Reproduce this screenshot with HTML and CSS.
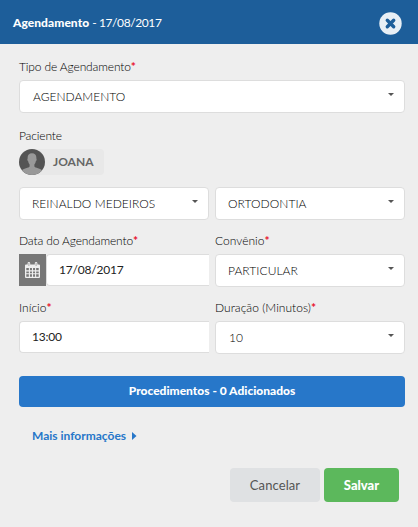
FILE: index.html
```html
<!DOCTYPE html>
<html lang="pt-BR">
<head>
<meta charset="utf-8">
<title>Agendamento</title>
<link rel="stylesheet" href="styles.css">
</head>
<body>
<header class="header">
  <h1 class="title"><b>Agendamento</b> <span class="title-date">- 17/08/2017</span></h1>
  <svg class="close" width="23" height="23" viewBox="0 0 23 23"><circle cx="11.5" cy="11.5" r="11.2" fill="#e8eff5"/><path d="M8.300 8.300l6.400 6.400M14.700 8.300l-6.400 6.400" stroke="#1d5e9a" stroke-width="3.400" stroke-linecap="round"/></svg>
</header>
<main class="form">
  <div class="field">
    <div class="label"><span>Tipo de Agendamento</span><i>*</i></div>
    <div class="select"><span>AGENDAMENTO</span></div>
  </div>
  <div class="patient">
    <div class="label"><span>Paciente</span></div>
    <div class="chip">
      <svg width="26" height="26" viewBox="0 0 26 26"><defs><clipPath id="avatar"><circle cx="13" cy="13" r="13"/></clipPath></defs><g clip-path="url(#avatar)"><path fill="#545454" d="M0 0h26v26H0z"/><path fill="#999" d="M13 4.200c-3.200 0-4.700 2-4.300 5.200-.7.2-.3 2.300.5 2.800.2 1.500.8 2.500 1.400 3.200v2.200c-.4 1.300-6.600 1.900-8.100 4.400V27h21v-5c-1.500-2.500-7.700-3.100-8.100-4.400v-2.200c.6-.7 1.200-1.700 1.400-3.200.8-.5 1.200-2.600.5-2.800.4-3.200-1.100-5.200-4.300-5.200z"/></g></svg>
      <span>JOANA</span>
    </div>
  </div>
  <div class="row professional">
    <div class="select"><span>REINALDO MEDEIROS</span></div>
    <div class="select"><span>ORTODONTIA</span></div>
  </div>
  <div class="row dates">
    <div class="field">
      <div class="label"><span>Data do Agendamento</span><i>*</i></div>
      <div class="group">
        <div class="addon"><svg width="15" height="16" viewBox="0 0 15 16"><path fill="#eee" fill-rule="evenodd" d="M1 2.500h1.600V1.300a1.300 1.300 0 0 1 2.600 0v1.200h4.600V1.300a1.300 1.300 0 0 1 2.600 0v1.200H14a1 1 0 0 1 1 1V15a1 1 0 0 1-1 1H1a1 1 0 0 1-1-1V3.500a1 1 0 0 1 1-1zM1.300 6v8.700h12.400V6z"/><path fill="none" stroke="#eee" stroke-width="1.100" d="M4.400 6v9M7.500 6v9M10.600 6v9M1 8.900h13M1 11.800h13"/><path stroke="#777" stroke-width=".6" d="M3.900 1v3M11.100 1v3"/></svg></div>
        <div class="input"><span>17/08/2017</span></div>
      </div>
    </div>
    <div class="field">
      <div class="label wide"><span>Convênio</span><i>*</i></div>
      <div class="select"><span>PARTICULAR</span></div>
    </div>
  </div>
  <div class="row times">
    <div class="field">
      <div class="label wide"><span>Início</span><i>*</i></div>
      <div class="input"><span>13:00</span></div>
    </div>
    <div class="field">
      <div class="label wide"><span>Duração (Minutos)</span><i>*</i></div>
      <div class="select"><span class="duration">10</span></div>
    </div>
  </div>
  <div class="procedures">Procedimentos - 0 Adicionados</div>
  <div class="more"><span>Mais informações</span><svg width="5" height="8" viewBox="0 0 5 8"><path d="M0 0l4.500 4L0 8z" fill="#2777c9"/></svg></div>
  <div class="actions">
    <div class="btn cancel">Cancelar</div>
    <div class="btn save">Salvar</div>
  </div>
</main>
</body>
</html>
```

FILE: styles.css
```css
* { box-sizing: border-box; }
body {
  margin: 0;
  height: 527px;
  overflow: hidden;
  background: #eee;
  color: #000;
  font: 300 12px/16px Lato, "Liberation Sans", sans-serif;
  white-space: nowrap;
}
.header {
  display: flex;
  justify-content: space-between;
  align-items: center;
  height: 44px;
  padding: 2px 16px 0 13px;
  background: #1d5e9a;
  color: #fff;
}
.title { margin: 0; font-size: 12px; font-weight: 400; line-height: 16px; }
.title b { font-weight: 900; letter-spacing: .05px; }
.title-date { letter-spacing: -.4px; }
.form { padding: 15px 13px 0 19px; }
.label { height: 21px; letter-spacing: -.13px; }
.label.wide { letter-spacing: .03px; }
.label i { color: #e8112d; font-style: normal; font-weight: 700; }
.select, .input {
  display: flex;
  align-items: center;
  justify-content: space-between;
  height: 33px;
  padding: 0 10px 0 12px;
  border: 1px solid #ddd;
  border-radius: 4px;
  background: #fff;
}
.select { letter-spacing: .05px; }
.select::after {
  content: "";
  border: 3px solid transparent;
  border-top: 3px solid #555;
  border-bottom: 0;
  margin-top: -4px;
}
.form > .field .select { padding-left: 13px; letter-spacing: 0; }
.duration { padding-left: 1px; }
.input {
  flex: 1;
  height: 32px;
  border-right: 0;
  border-radius: 4px 0 0 4px;
  color: #222;
  font-weight: 400;
  letter-spacing: -.2px;
}
.patient { margin-top: 15px; }
.chip {
  display: flex;
  align-items: center;
  gap: 8px;
  width: 85px;
  height: 26px;
  border-radius: 13px 4px 4px 13px;
  background: #e8e8e8;
  color: #666;
  font-weight: 700;
}
.form > .field, .procedures, .row { width: 386px; }
.row { display: grid; grid-template-columns: 190px 190px; gap: 6px; }
.professional { margin-top: 12px; }
.dates, .times { margin-top: 13px; }
.group { display: flex; }
.addon {
  display: flex;
  align-items: center;
  justify-content: center;
  width: 27px;
  height: 32px;
  background: #777;
}
.procedures {
  height: 31px;
  margin-top: 22px;
  border-radius: 4px;
  background: #2777c9;
  color: #fff;
  font-weight: 900;
  line-height: 30px;
  text-align: center;
}
.more {
  display: flex;
  align-items: center;
  gap: 6px;
  height: 16px;
  margin: 21px 0 0 13px;
  color: #2777c9;
  font-weight: 700;
}
.actions { display: flex; justify-content: flex-end; gap: 4px; margin: 24px 6px 0 0; }
.btn {
  width: 90px;
  height: 34px;
  border-radius: 4px;
  font-size: 13px;
  font-weight: 400;
  line-height: 34px;
  text-align: center;
}
.cancel { background: #dfe1e3; color: #555; letter-spacing: .1px; }
.save { width: 75px; background: #5cb85c; color: #fff; font-weight: 900; }
```
